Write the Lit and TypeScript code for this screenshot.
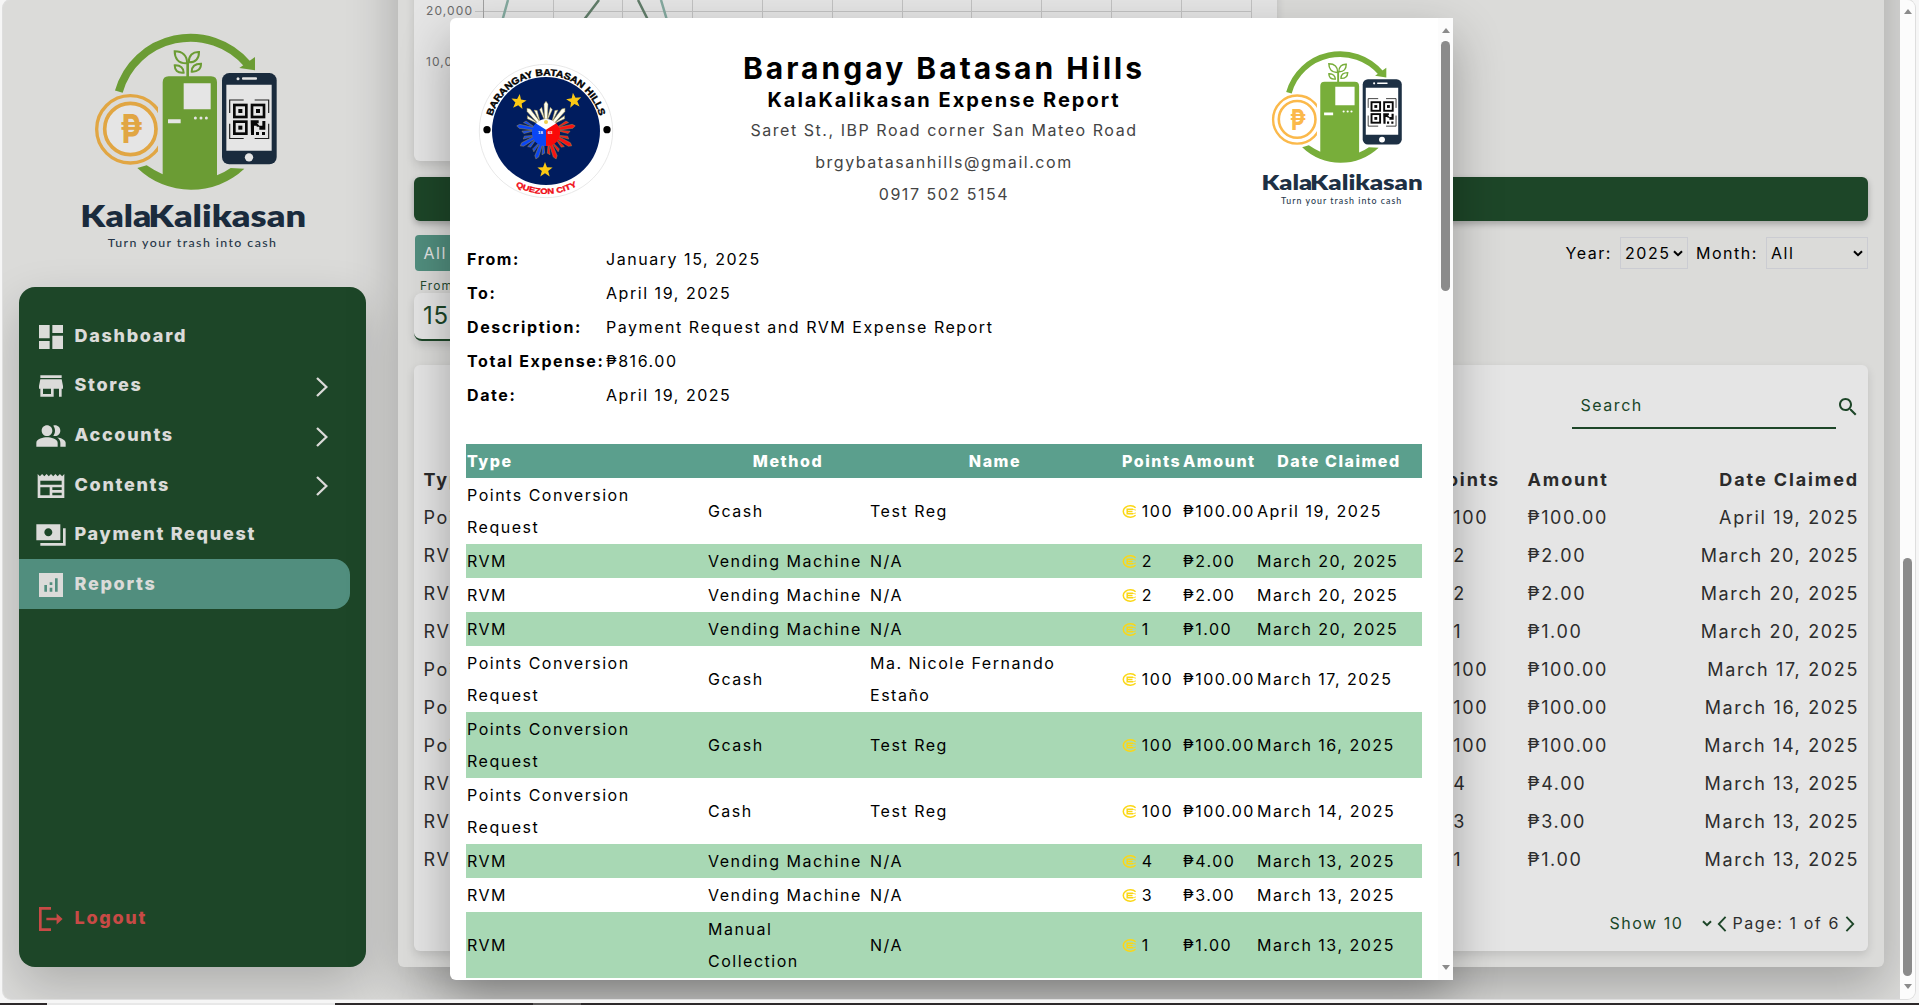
import { LitElement, html, svg, css, nothing } from "lit";
import { customElement } from "lit/decorators.js";

const ICONS: Record<string, string> = {
  dashboard: "M3 13h8V3H3v10zm0 8h8v-6H3v6zm10 0h8V11h-8v10zm0-18v6h8V3h-8z",
  store: "M20 4H4v2h16V4zm1 10v-2l-1-5H4l-1 5v2h1v6h10v-6h4v6h2v-6h1zm-9 4H6v-4h6v4z",
  people:
    "M16.67 13.13C18.04 14.06 19 15.32 19 17v3h4v-3c0-2.18-3.57-3.47-6.33-3.87zM15 12c2.21 0 4-1.79 4-4s-1.79-4-4-4c-.47 0-.91.1-1.33.24C14.5 5.27 15 6.58 15 8s-.5 2.73-1.33 3.76c.42.14.86.24 1.33.24zM9 12c2.21 0 4-1.79 4-4s-1.79-4-4-4-4 1.79-4 4 1.79 4 4 4zm0 1c-2.67 0-8 1.34-8 4v3h16v-3c0-2.66-5.33-4-8-4z",
  news:
    "M22 3l-1.67 1.67L18.67 3 17 4.67 15.33 3l-1.66 1.67L12 3l-1.67 1.67L8.67 3 7 4.67 5.33 3 3.67 4.67 2 3v18h20V3zM11 19H4v-6h7v6zm9 0h-7v-2h7v2zm0-4h-7v-2h7v2zm0-4H4V8h16v3z",
  payments:
    "M19 4H1v12h18V4zm-9 9c-1.66 0-3-1.34-3-3s1.34-3 3-3 3 1.34 3 3-1.34 3-3 3zM23 7v13H4v-2h17V7h2z",
  chart:
    "M21 3H3v18h18V3zM9 17H7v-5h2v5zm4 0h-2v-3h2v3zm0-5h-2v-2h2v2zm4 5h-2V7h2v10z",
  logout: "M3 3H12V5H5V19H12V21H3zM8.5 11H16.2V7.8L20.7 12L16.2 16.2V13H8.5z",
  search:
    "M15.5 14h-.79l-.28-.27C15.41 12.59 16 11.11 16 9.5 16 5.91 13.09 3 9.5 3S3 5.91 3 9.5 5.91 16 9.5 16c1.61 0 3.09-.59 4.23-1.57l.27.28v.79l5 4.99L20.49 19l-4.99-5zm-6 0C7.01 14 5 11.99 5 9.5S7.01 5 9.5 5 14 7.01 14 9.5 11.99 14 9.5 14z",
};

const icon = (name: string, cls: string) =>
  html`<svg class=${cls} viewBox="0 0 24 24"><path fill="currentColor" d=${ICONS[name]} /></svg>`;

const chevron = (cls: string, d: string) =>
  html`<svg class=${cls} viewBox="0 0 12 20"><path d=${d} fill="none" stroke="currentColor" stroke-width="2.3" /></svg>`;

const caret = html`<svg class="caret" viewBox="0 0 10 7"><path d="M1 1.2L5 5.2L9 1.2" fill="none" stroke="currentColor" stroke-width="2" /></svg>`;

@customElement("kk-logo")
class KkLogo extends LitElement {
  static styles = css`
    :host { display: block; letter-spacing: 0; }
    svg { display: block; width: 100%; height: 100%; }
    .word { font: 800 89px "Lato", sans-serif; fill: #1d3044; }
    .tag { font: 500 37px "Lato", sans-serif; fill: #2a3c50; }
    .peso { font: 700 117px "Inter", sans-serif; fill: #fbb94b; }
  `;
  private finder(x: number, y: number) {
    return svg`<rect x=${x} y=${y} width="44" height="44" fill="#0a0a0a" />
      <rect x=${x + 8} y=${y + 8} width="28" height="28" fill="#fff" />
      <rect x=${x + 16} y=${y + 16} width="12" height="12" fill="#0a0a0a" />`;
  }
  render() {
    return html`<svg viewBox="240 95 680 660">
      <g fill="none" stroke="#78ae3a">
        <path d="M356.500 274A223 221 0 0 1 742 191" stroke-width="24" />
        <path d="M563 232V184" stroke-width="8" />
        <g stroke-width="6">
          <path d="M561 189C533 190 524 172 524 153C548 153 562 166 561 189z" />
          <path d="M566 186C566 165 578 154 597 155C597 175 587 187 566 186z" />
          <path d="M551 217C532 219 524 209 524 195C542 194 551 204 551 217z" />
          <path d="M575 214C575 199 585 190 603 190C603 206 593 215 575 214z" />
        </g>
      </g>
      <path d="M765 170V210L718 203z" fill="#78ae3a" />
      <path d="M488 522V246Q488 228 506 228H633Q651 228 651 246V525Q672 517 692 503L733 505A232 232 0 0 1 412 503L440 495Q465 512 488 522z" fill="#78ae3a" />
      <path d="M551 249h81v78h-81zM504 357h38v12h-38z" fill="#fff" />
      <g fill="#fff"><circle cx="586" cy="353" r="4.500" /><circle cx="603" cy="353" r="4.500" /><circle cx="619" cy="353" r="4.500" /></g>
      <clipPath id="coin"><path d="M240 270H474V500H240z" /></clipPath>
      <g clip-path="url(#coin)" stroke="#fbb94b" fill="#fff">
        <circle cx="391" cy="387" r="101" stroke-width="10" fill="none" />
        <circle cx="391" cy="386" r="77" stroke-width="11" />
      </g>
      <text class="peso" x="361" y="429" textLength="67" lengthAdjust="spacingAndGlyphs">₱</text>
      <rect x="666" y="218" width="164" height="274" rx="22" fill="#1d3044" />
      <path d="M679 253h136v198H679z" fill="#fff" />
      <rect x="726" y="231" width="45" height="7" rx="3" fill="#fff" />
      <circle cx="714" cy="235" r="4.500" fill="#fff" /><circle cx="747" cy="471" r="12.500" fill="#fff" />
      <path d="M689 338V299H731M764 299H806V338M806 370V414.500H764M731 414.500H689V370" fill="none" stroke="#222" stroke-width="3.500" />
      ${this.finder(699, 310)}${this.finder(752, 310)}${this.finder(699, 360)}
      <path d="M752 360h24v9h-5l7 7h9v-14h9v26h-18v-9h-8v-3h-8v28h-9zM768 395h9v9h-9zM786 395h9v9h-9z" fill="#0a0a0a" />
      <text class="word" x="241" y="681" textLength="213" lengthAdjust="spacingAndGlyphs">Kala</text>
      <text class="word" x="445" y="681" textLength="473" lengthAdjust="spacingAndGlyphs">Kalikasan</text>
      <text class="tag" x="323" y="740" textLength="505">Turn your trash into cash</text>
    </svg>`;
  }
}

@customElement("barangay-seal")
class BarangaySeal extends LitElement {
  static styles = css`
    :host { display: block; letter-spacing: 0; }
    svg { display: block; width: 100%; height: 100%; }
    .ring { font: 700 28px "Liberation Sans", sans-serif; fill: #000; stroke: #000; stroke-width: 1.2; }
    .city { font: 700 23px "Liberation Sans", sans-serif; fill: #f00a14; stroke: #f00a14; stroke-width: 1; }
    .year { font: 700 13px "Liberation Sans", sans-serif; fill: #fff; }
  `;
  private star(cx: number, cy: number, rot: number) {
    const pts = Array.from({ length: 10 }, (_, i) => {
      const r = i % 2 ? 10 : 24;
      const a = ((rot + i * 36 - 90) * Math.PI) / 180;
      return `${(cx + r * Math.cos(a)).toFixed(1)},${(cy + r * Math.sin(a)).toFixed(1)}`;
    }).join(" ");
    return svg`<polygon points=${pts} fill="#fcc914" />`;
  }
  private ray(angle: number) {
    const warm = Math.abs(angle) <= 40;
    const color = warm ? "#fffef0" : angle < 0 ? "#0a46f5" : "#fa1212";
    const edge = warm ? "#a5954a" : "#a08a4a";
    return svg`<g transform="rotate(${angle} 227 226)" fill=${color} stroke=${edge} stroke-width="1.500">
      <path d="M222 192L208 162L214 155L223 190z" /><path d="M232 192L246 162L240 155L231 190z" />
      <path d="M223 190L221 145L227 137L233 145L231 190z" /></g>`;
  }
  render() {
    return html`<svg viewBox="23 22 408 408">
      <defs>
        <path id="top" d="M60.400 226A166.600 166.600 0 0 1 393.600 226" />
        <path id="low" d="M38 226A189 189 0 0 0 416 226" />
      </defs>
      <circle cx="227" cy="226" r="200" fill="#fff" stroke="#dcdcdc" stroke-width="2" />
      <circle cx="227" cy="226" r="162" fill="#001c5e" />
      <text class="ring"><textPath href="#top" startOffset="45" textLength="433" lengthAdjust="spacingAndGlyphs">BARANGAY BATASAN HILLS</textPath></text>
      <text class="city"><textPath href="#low" startOffset="201" textLength="193" lengthAdjust="spacingAndGlyphs">QUEZON CITY</textPath></text>
      <circle cx="50" cy="222" r="11" /><circle cx="410" cy="222" r="11" />
      ${[0, -40, 40, -80, 80, -120, 120, -160, 160].map((a) => this.ray(a))}
      <circle cx="227" cy="230" r="40" fill="#fff" />
      <path d="M227 222L196 203A40 40 0 0 0 227 271z" fill="#0a46f5" />
      <path d="M227 222L258 203A40 40 0 0 1 227 271z" fill="#fa0a0a" />
      <circle cx="227" cy="199" r="6" fill="#f0cf50" />
      <text class="year" x="203" y="236">18</text><text class="year" x="232" y="236">63</text>
      ${this.star(145, 139, 8)}${this.star(311, 135, -8)}${this.star(224, 343, 0)}
    </svg>`;
  }
}

interface Claim { type: string[]; method: string[]; name: string[]; points: number; date: string; }
const PCR = ["Points Conversion", "Request"];
const VM = ["Vending Machine"];
const claims: Claim[] = [
  { type: PCR, method: ["Gcash"], name: ["Test Reg"], points: 100, date: "April 19, 2025" },
  { type: ["RVM"], method: VM, name: ["N/A"], points: 2, date: "March 20, 2025" },
  { type: ["RVM"], method: VM, name: ["N/A"], points: 2, date: "March 20, 2025" },
  { type: ["RVM"], method: VM, name: ["N/A"], points: 1, date: "March 20, 2025" },
  { type: PCR, method: ["Gcash"], name: ["Ma. Nicole Fernando", "Estaño"], points: 100, date: "March 17, 2025" },
  { type: PCR, method: ["Gcash"], name: ["Test Reg"], points: 100, date: "March 16, 2025" },
  { type: PCR, method: ["Cash"], name: ["Test Reg"], points: 100, date: "March 14, 2025" },
  { type: ["RVM"], method: VM, name: ["N/A"], points: 4, date: "March 13, 2025" },
  { type: ["RVM"], method: VM, name: ["N/A"], points: 3, date: "March 13, 2025" },
  { type: ["RVM"], method: ["Manual", "Collection"], name: ["N/A"], points: 1, date: "March 13, 2025" },
];
const lines = (l: string[]) => l.map((t, i) => html`${i ? html`<br />` : nothing}${t}`);

const coin = html`<svg class="coin" viewBox="0 0 15 13"><g fill="none" stroke="#fbd715">
  <path d="M13.600 2.800A7 5.700 0 1 0 13.600 10.200" stroke-width="1.500" />
  <path d="M11 4.300H5.200V8.800H11M5.200 6.500H10.500" stroke-width="1.500" /><path d="M11 4.300L14 5.200M11 8.800L14 7.900" stroke-width="0.800" /></g></svg>`;

const menu: [string, string, boolean][] = [
  ["dashboard", "Dashboard", false],
  ["store", "Stores", true],
  ["people", "Accounts", true],
  ["news", "Contents", true],
  ["payments", "Payment Request", false],
  ["chart", "Reports", false],
];
const facts: [string, string][] = [
  ["From:", "January 15, 2025"],
  ["To:", "April 19, 2025"],
  ["Description:", "Payment Request and RVM Expense Report"],
  ["Total Expense:", "₱816.00"],
  ["Date:", "April 19, 2025"],
];

@customElement("app-root")
class AppRoot extends LitElement {
  static styles = css`
    :host {
      display: flex; flex-direction: column; width: 1919px; height: 1005px; overflow: hidden;
      background: #f6f6f6; font: 400 16px "Inter", sans-serif; letter-spacing: 1.54px; color: #000;
    }
    * { box-sizing: border-box; }
    .window {
      position: relative; display: flex; height: 999px; margin: 0 4px 0 3px; flex: none;
      border-radius: 8px; overflow: hidden; background: #f4f4f2; box-shadow: 0 0 0 1px #dedede;
    }
    .page { flex: 1; display: flex; align-items: flex-end; overflow: hidden; }

    .side { width: 395px; height: 999px; flex: none; }
    .brand { width: 226.7px; height: 220px; margin: 31.7px 0 0 77px; }
    .nav {
      width: 347px; height: 680px; margin: 35.3px 0 0 16px; padding: 24px 16px 24px 0;
      display: flex; flex-direction: column; border-radius: 16px; background: #214e2d; color: #f4f4f2;
      box-shadow: 0 20px 50px rgba(0, 0, 0, 0.2); font-weight: 800; font-size: 18px; letter-spacing: 1.7px;
    }
    .item { display: flex; align-items: center; height: 49.67px; padding: 0 22px 0 16px; flex: none; }
    .item.on { background: #5b9f8d; border-radius: 0 16px 16px 0; }
    .item span { margin: -1px 0 0 7.5px; flex: 1; }
    .nav-icon { width: 32px; height: 32px; margin-top: 2px; }
    .nav-chev { width: 12px; height: 20px; margin-top: 3px; }
    .out { margin-top: auto; color: #df534e; margin-bottom: 0.5px; }

    .main {
      width: 1486px; height: 1120px; margin-bottom: 32px; padding: 16px; flex: none;
      display: flex; flex-direction: column; border-radius: 6px; background: #f4f4f2;
      box-shadow: 0 20px 50px rgba(0, 0, 0, 0.25);
    }
    .card { background: #fff; border-radius: 6px; box-shadow: 0 4px 10px rgba(0, 0, 0, 0.12); }
    .chart { flex: 1; width: 863px; display: flex; align-items: flex-end; }
    .chart svg { display: block; width: 863px; height: 161px; }
    .tick { font: 400 12px "Inter", sans-serif; letter-spacing: 1.1px; fill: #787878; }
    .bar { height: 44px; margin-top: 16px; border-radius: 6px; background: #214e2d; box-shadow: 0 3px 6px rgba(0, 0, 0, 0.25); flex: none; }
    .filters { height: 144px; padding-top: 14px; display: flex; justify-content: space-between; flex: none; }
    .tab { display: flex; align-items: center; width: 80px; height: 36px; margin-left: 1px; padding-left: 8.5px; border-radius: 4px; background: #5b9f8d; color: #fff; }
    .flabel { font-size: 12px; line-height: 16px; margin: 7px 0 -1px 6px; letter-spacing: 1.1px; color: #2a5436; }
    .date { height: 48px; width: 180px; padding: 8px 9px; font-size: 24px; letter-spacing: 0.7px; line-height: 29px; background: #fff; color: #214e2d; border-radius: 8px; border-bottom: 2px solid #214e2d; box-shadow: 0 4px 8px rgba(0, 0, 0, 0.12); }
    .selects { display: flex; height: 36px; align-items: center; }
    .select { display: flex; align-items: center; justify-content: space-between; height: 32px; border: 1px solid #e2e4ea; padding: 0 4px; }
    .year { width: 68px; margin: 0 8px; }
    .month { width: 102px; margin-left: 8px; }
    .caret { width: 10px; height: 7px; flex: none; }

    .table { height: 586px; padding: 32px 9px 10px 9.5px; display: flex; flex-direction: column; flex: none; color: #333; }
    .find { display: flex; justify-content: flex-end; height: 63px; margin-right: -1px; color: #214e2d; flex: none; }
    .find-box { width: 264px; height: 32px; padding: 0 8.5px; line-height: 17px; border-bottom: 2px solid #214e2d; }
    .find-icon { width: 24px; height: 24px; margin-top: -2px; }
    .row { display: grid; grid-template-columns: 1004px 100px 1fr 180px; height: 38px; align-items: center; font-size: 18px; letter-spacing: 1.65px; white-space: nowrap; flex: none; }
    .row.head { font-weight: 700; letter-spacing: 1.9px; color: #303030; }
    .row > :last-child { text-align: right; }
    .hp { padding-left: 6px; }
    .pts { display: flex; align-items: center; padding-left: 6px; }
    .pager { display: flex; align-items: center; justify-content: flex-end; margin: auto 4px 3px 0; height: 30px; }
    .pager .caret { margin: 0 5px 0 19px; display: block; }
    .green { color: #214e2d; }
    .pg { width: 10px; height: 16px; color: #214e2d; margin-top: 2px; }
    .pager b { font-weight: 400; margin: 0 5px; letter-spacing: 1.6px; }

    .shade { position: absolute; inset: 0 15px 0 0; background: rgba(0, 0, 0, 0.1); }
    .modal {
      position: absolute; left: 447px; top: 18px; width: 1003px; height: 962px; display: flex;
      background: #fff; border-radius: 6px 0 0 6px; overflow: hidden; box-shadow: 0 20px 50px rgba(0, 0, 0, 0.3);
    }
    .sheet { width: 956px; margin: 0 16px; flex: none; height: 962px; overflow: hidden; }
    .letter { display: grid; grid-template-columns: 162.4px 1fr 162.4px; height: 224px; padding-top: 32px; }
    .seal { width: 136px; height: 136px; margin: 12.5px 0 0 12px; }
    .small { width: 162.4px; height: 157.3px; margin-left: 1px; margin-top: 0; }
    .head-text { text-align: center; color: #444; line-height: 32px; }
    .title { font-weight: 700; font-size: 30px; line-height: 36px; letter-spacing: 3.02px; color: #000; }
    .sub { font-weight: 700; font-size: 20px; line-height: 28px; letter-spacing: 2px; color: #000; }
    .facts { display: grid; grid-template-columns: 140px 1fr; margin: 0; line-height: 34px; white-space: nowrap; }
    .facts dt { padding-left: 1px; font-weight: 700; letter-spacing: 1.6px; }
    .facts dd { margin: 0; }
    table { width: 956px; margin-top: 32px; table-layout: fixed; border-collapse: collapse; line-height: 32px; }
    td, th { padding: 1px; white-space: nowrap; }
    td { letter-spacing: 1.51px; }
    th { font-weight: 800; color: #fff; background: #5b9f8d; }
    th:first-child, td { text-align: left; }
    tbody tr:nth-child(even) { background: #a8d8b4; }
    .coin { width: 15px; height: 13px; vertical-align: -1px; margin: 0 5.3px 0 -0.5px; flex: none; }

    .scroll { width: 15px; flex: none; display: flex; flex-direction: column; align-items: center; background: #fcfcfc; }
    .thumb { width: 9px; border-radius: 5px; background: #8b8b8b; }
    .up, .down { width: 0; height: 0; border: 4.5px solid transparent; }
    .up { border-bottom: 5px solid #8b8b8b; border-top: 0; }
    .down { border-top: 5px solid #8b8b8b; border-bottom: 0; }
    .m-up { margin: 10px 0 8px; }
    .m-thumb { height: 250px; }
    .m-down { margin: auto 0 10px; }
    .w-up { margin: 9px 0 auto; }
    .w-thumb { height: 418px; }
    .w-down { margin: 8px 0 10px; }

    .taskbar { margin-top: 4px; height: 2px; display: flex; background: #2d292a; flex: none; }
    .task-a { width: 288px; margin-left: 47px; background: #e8e8e8; }
    .task-b { width: 48px; margin-left: 198px; background: #5c5959; }
  `;

  private chart() {
    const xs = [139.5, 208.5, 278.5, 348.5, 418.5, 488.5, 557.5, 627.5, 697.5, 767.5, 837.5];
    return html`<svg viewBox="0 0 863 161">
      <g stroke="#d8d8d8" stroke-width="1">
        <path d="M61 11.500H837.500" />
        ${xs.map((x) => svg`<path d="M${x} 0V120" />`)}
      </g>
      <path d="M69.500 0V120" stroke="#b4b4b4" />
      <g fill="none" stroke-width="2.500">
        <path d="M94 0L79 54M247 0L263 54" stroke="#93bdb1" />
        <path d="M185 0L144 54M224 0L243 38" stroke="#6d8c76" />
      </g>
      <text class="tick" x="12" y="15">20,000</text>
      <text class="tick" x="12" y="66">10,000</text>
    </svg>`;
  }

  private sidebar() {
    return html`<aside class="side">
      <kk-logo class="brand"></kk-logo>
      <nav class="nav">
        ${menu.map(([ic, label, more]) => html`<div class="item ${label === "Reports" ? "on" : ""}">
          ${icon(ic, "nav-icon")}<span>${label}</span>
          ${more ? chevron("nav-chev", "M1 1L10.400 10L1 19") : nothing}
        </div>`)}
        <div class="item out">${icon("logout", "nav-icon")}<span>Logout</span></div>
      </nav>
    </aside>`;
  }

  private reports() {
    return html`<main class="main">
      <section class="card chart">${this.chart()}</section>
      <div class="bar"></div>
      <div class="filters">
        <div>
          <div class="tab">All</div>
          <div class="flabel">From</div>
          <div class="date">15</div>
        </div>
        <div class="selects">
          <span>Year:</span><span class="select year">2025${caret}</span>
          <span>Month:</span><span class="select month">All${caret}</span>
        </div>
      </div>
      <section class="card table">
        <div class="find"><div class="find-box">Search</div>${icon("search", "find-icon")}</div>
        <div class="row head"><span>Type</span><span class="hp">Points</span><span>Amount</span><span>Date Claimed</span></div>
        ${claims.map((c) => html`<div class="row">
          <span>${c.type.join(" ")}</span><span class="pts">${coin}${c.points}</span><span>₱${c.points}.00</span><span>${c.date}</span>
        </div>`)}
        <div class="pager">
          <span class="green">Show 10</span><span class="green">${caret}</span>
          ${chevron("pg", "M10.500 1L2 10L10.500 19")}<b>Page: 1 of 6</b>${chevron("pg", "M1.500 1L10 10L1.500 19")}
        </div>
      </section>
    </main>`;
  }

  private dialog() {
    return html`<div class="modal">
      <div class="sheet">
        <header class="letter">
          <barangay-seal class="seal"></barangay-seal>
          <div class="head-text">
            <div class="title">Barangay Batasan Hills</div>
            <div class="sub">KalaKalikasan Expense Report</div>
            <div>Saret St., IBP Road corner San Mateo Road</div>
            <div>brgybatasanhills@gmail.com</div>
            <div>0917 502 5154</div>
          </div>
          <kk-logo class="small"></kk-logo>
        </header>
        <dl class="facts">${facts.map(([k, v]) => html`<dt>${k}</dt><dd>${v}</dd>`)}</dl>
        <table>
          <colgroup><col width="241" /><col width="162" /><col width="252" /><col width="61" /><col width="74" /><col width="166" /></colgroup>
          <thead><tr><th>Type</th><th>Method</th><th>Name</th><th>Points</th><th>Amount</th><th>Date Claimed</th></tr></thead>
          <tbody>
            ${claims.map((c) => html`<tr>
              <td>${lines(c.type)}</td><td>${lines(c.method)}</td><td>${lines(c.name)}</td>
              <td>${coin}${c.points}</td><td>₱${c.points}.00</td><td>${c.date}</td>
            </tr>`)}
          </tbody>
        </table>
      </div>
      <div class="scroll"><i class="up m-up"></i><i class="thumb m-thumb"></i><i class="down m-down"></i></div>
    </div>`;
  }

  render() {
    return html`
      <div class="window">
        <div class="page">${this.sidebar()}${this.reports()}</div>
        <div class="scroll"><i class="up w-up"></i><i class="thumb w-thumb"></i><i class="down w-down"></i></div>
        <div class="shade"></div>
        ${this.dialog()}
      </div>
      <div class="taskbar"><i class="task-a"></i><i class="task-b"></i></div>
    `;
  }
}
